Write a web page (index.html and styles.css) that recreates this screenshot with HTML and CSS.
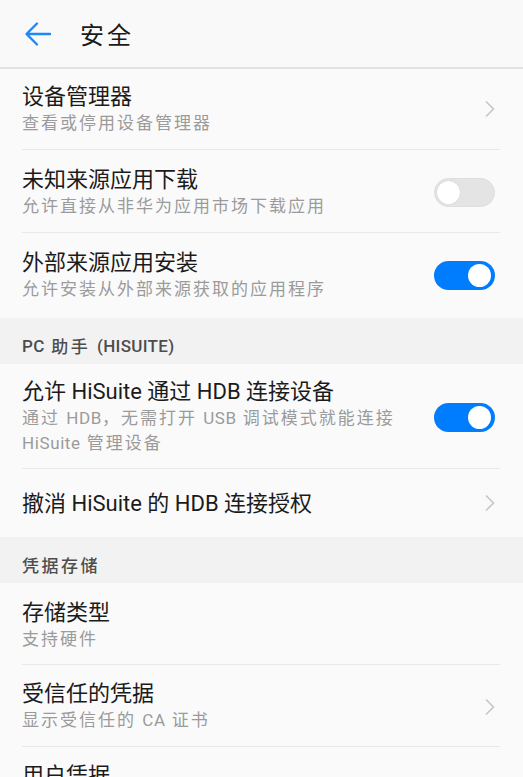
FILE: index.html
```html
<!DOCTYPE html>
<html lang="zh-CN">
<head>
<meta charset="utf-8">
<title>安全</title>
<link rel="stylesheet" href="styles.css">
</head>
<body>
<div class="screen">
  <header class="topbar">
    <svg class="back" width="30" height="30" viewBox="0 0 30 30" aria-hidden="true">
      <path d="M27 15H4.5M14 4.5L3.5 15L14 25.5" fill="none" stroke="#1e88f5" stroke-width="2.4" stroke-linecap="round" stroke-linejoin="round"/>
    </svg>
    <h1 class="page-title">安全</h1>
  </header>

  <div class="list">
    <div class="row r1">
      <div class="text">
        <div class="title">设备管理器</div>
        <div class="sub">查看或停用设备管理器</div>
      </div>
      <svg class="chev" width="12" height="18" viewBox="0 0 12 18" aria-hidden="true"><path d="M2 1.5L9.5 9L2 16.5" fill="none" stroke="#c6c6c6" stroke-width="1.6"/></svg>
    </div>
    <div class="row r2">
      <div class="text">
        <div class="title">未知来源应用下载</div>
        <div class="sub">允许直接从非华为应用市场下载应用</div>
      </div>
      <span class="toggle off"><span class="knob"></span></span>
    </div>
    <div class="row r3 last">
      <div class="text">
        <div class="title">外部来源应用安装</div>
        <div class="sub">允许安装从外部来源获取的应用程序</div>
      </div>
      <span class="toggle on"><span class="knob"></span></span>
    </div>
  </div>

  <div class="section"><span class="en">PC</span> 助手 <span class="en">(HISUITE)</span></div>

  <div class="list">
    <div class="row r4">
      <div class="text">
        <div class="title">允许 HiSuite 通过 HDB 连接设备</div>
        <div class="sub narrow">通过 <span class="en">HDB</span>，无需打开 <span class="en">USB</span> 调试模式就能连接 <span class="en">HiSuite</span> 管理设备</div>
      </div>
      <span class="toggle on"><span class="knob"></span></span>
    </div>
    <div class="row r5 last">
      <div class="text">
        <div class="title">撤消 HiSuite 的 HDB 连接授权</div>
      </div>
      <svg class="chev" width="12" height="18" viewBox="0 0 12 18" aria-hidden="true"><path d="M2 1.5L9.5 9L2 16.5" fill="none" stroke="#c6c6c6" stroke-width="1.6"/></svg>
    </div>
  </div>

  <div class="section">凭据存储</div>

  <div class="list">
    <div class="row r6">
      <div class="text">
        <div class="title">存储类型</div>
        <div class="sub">支持硬件</div>
      </div>
    </div>
    <div class="row r7">
      <div class="text">
        <div class="title">受信任的凭据</div>
        <div class="sub">显示受信任的 <span class="en">CA</span> 证书</div>
      </div>
      <svg class="chev" width="12" height="18" viewBox="0 0 12 18" aria-hidden="true"><path d="M2 1.5L9.5 9L2 16.5" fill="none" stroke="#c6c6c6" stroke-width="1.6"/></svg>
    </div>
    <div class="row r8 last">
      <div class="text">
        <div class="title">用户凭据</div>
        <div class="sub">查看和修改存储的凭据</div>
      </div>
    </div>
  </div>
</div>
</body>
</html>
```
FILE: styles.css
```css
html, body {
  margin: 0;
  padding: 0;
  overflow: hidden;
}
body {
  background: #fafafa;
  font-family: Roboto, "Noto Sans CJK SC", sans-serif;
  color: #1b1b1b;
}
.screen {
  width: 523px;
  height: 777px;
  overflow: hidden;
  background: #fafafa;
}
.topbar {
  height: 67px;
  display: flex;
  align-items: center;
  padding-left: 23px;
  border-bottom: 2px solid #e3e3e3;
  background: #f9f9f9;
}
.back {
  display: block;
  margin-top: 1px;
}
.page-title {
  margin: 5px 0 0 27px;
  font-size: 24px;
  font-weight: 400;
  letter-spacing: 3px;
  color: #1a1a1a;
  line-height: 30px;
}
.list {
  padding: 0 23px 0 22px;
}
.row {
  display: flex;
  align-items: center;
  border-bottom: 1px solid #e9e9e9;
  box-sizing: border-box;
}
.row.last {
  border-bottom: none;
}
.r1 { height: 81px; }
.r2 { height: 83px; padding-top: 3px; }
.r3 { height: 85px; }
.r4 { height: 105px; padding-top: 2px; }
.r5 { height: 68px; }
.r6 { height: 82px; padding-top: 3px; }
.r7 { height: 82px; padding-top: 2px; }
.r8 { height: 82px; }
.text {
  flex: 1;
  min-width: 0;
}
.title {
  font-size: 22px;
  line-height: 27px;
  color: #1b1b1b;
}
.sub {
  font-size: 17px;
  line-height: 25px;
  letter-spacing: 2px;
  color: #9b9b9b;
  margin-top: 1px;
}
.en {
  letter-spacing: 0.6px;
}
.sub.narrow {
  width: 390px;
}
.chev {
  display: block;
  margin-right: 4px;
}
.toggle {
  position: relative;
  display: block;
  width: 61px;
  height: 29px;
  border-radius: 15px;
  box-sizing: border-box;
  flex: none;
  margin-right: 5px;
}
.toggle.off {
  background: #e4e4e4;
  border: 1px solid #dedede;
}
.toggle.on {
  background: #007dff;
}
.knob {
  position: absolute;
  top: 3px;
  width: 23px;
  height: 23px;
  border-radius: 50%;
  background: #ffffff;
}
.toggle.off .knob {
  top: 2px;
  left: 2px;
  box-shadow: 0 0 1px rgba(0,0,0,0.2);
}
.toggle.on .knob {
  right: 4px;
}
.section {
  height: 46px;
  box-sizing: border-box;
  padding: 9px 22px 0;
  display: flex;
  align-items: center;
  background: #f2f2f2;
  font-size: 17px;
  letter-spacing: 2.5px;
  color: #4d4d4d;
  font-weight: 500;
  white-space: pre;
}
.section .en {
  letter-spacing: 0.3px;
}
```
